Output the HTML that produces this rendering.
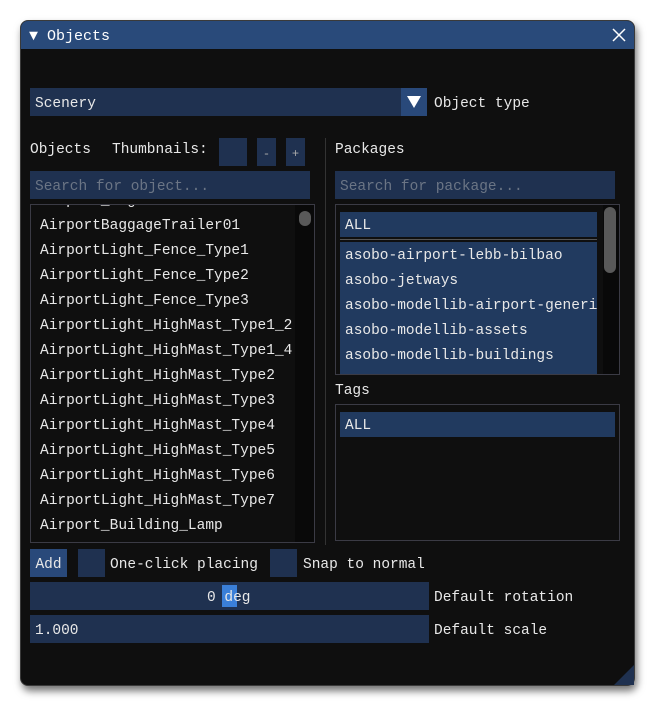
<!DOCTYPE html>
<html><head><meta charset="utf-8"><style>
*{margin:0;padding:0;box-sizing:border-box}
body{width:655px;height:706px;background:#fff;position:relative;overflow:hidden;font-family:"Liberation Mono",monospace;font-size:14.5px;color:#e8e8e8}
.a{position:absolute}
.win{left:20px;top:20px;width:615px;height:666px;background:#0f0f0f;border-radius:8px;box-shadow:2px 5px 8px rgba(0,0,0,.55);overflow:hidden;border:1px solid #3a3a3a}
.title{left:0;top:0;width:100%;height:28px;background:#294a7a}
.f{background:#1f3150}
.t{line-height:28px;white-space:pre;padding-top:2px}
.ph{color:#6b7585}
.bd{border:1px solid #3b3b45}
.sel{background:#213a5f}
</style></head><body>
<div class="a win">
 <div class="a title"></div>
 <div class="a t" style="left:8px;top:0;color:#fff;font-size:15px">▼ Objects</div>
 <svg class="a" style="left:591px;top:7px" width="14" height="14"><path d="M1 1L13 13M13 1L1 13" stroke="#fff" stroke-width="1.5"/></svg>
</div>
<div class="a f" style="left:30px;top:88px;width:371px;height:28px"></div>
<div class="a t" style="left:35px;top:88px">Scenery</div>
<div class="a" style="left:401px;top:88px;width:26px;height:28px;background:#29497a"></div>
<svg class="a" style="left:406px;top:95px" width="16" height="14"><path d="M1 1H15L8 13Z" fill="#fff"/></svg>
<div class="a t" style="left:434px;top:88px">Object type</div>

<div class="a t" style="left:30px;top:134px">Objects</div>
<div class="a t" style="left:112px;top:134px">Thumbnails:</div>
<div class="a f" style="left:219px;top:138px;width:28px;height:28px"></div>
<div class="a f t" style="left:257px;top:138px;width:19px;height:28px;text-align:center;color:#aaa;font-size:12px">-</div>
<div class="a f t" style="left:286px;top:138px;width:19px;height:28px;text-align:center;color:#aaa;font-size:12px">+</div>
<div class="a" style="left:325px;top:138px;width:1px;height:407px;background:#333"></div>

<div class="a f" style="left:30px;top:171px;width:280px;height:28px"></div>
<div class="a t ph" style="left:35px;top:171px">Search for object...</div>
<div class="a bd" style="left:30px;top:204px;width:285px;height:339px;overflow:hidden">
 <div class="a" style="right:0;top:0;width:19px;height:100%;background:#090909"></div>
 <div class="a" style="right:3px;top:6px;width:12px;height:15px;border-radius:6px;background:#595959"></div>
 <div class="a" style="left:9px;top:-16px;line-height:25px;white-space:pre">Airport_Bag
AirportBaggageTrailer01
AirportLight_Fence_Type1
AirportLight_Fence_Type2
AirportLight_Fence_Type3
AirportLight_HighMast_Type1_2
AirportLight_HighMast_Type1_4
AirportLight_HighMast_Type2
AirportLight_HighMast_Type3
AirportLight_HighMast_Type4
AirportLight_HighMast_Type5
AirportLight_HighMast_Type6
AirportLight_HighMast_Type7
Airport_Building_Lamp
Airport_Bui</div>
</div>

<div class="a t" style="left:335px;top:134px">Packages</div>
<div class="a f" style="left:335px;top:171px;width:280px;height:28px"></div>
<div class="a t ph" style="left:340px;top:171px">Search for package...</div>
<div class="a bd" style="left:335px;top:204px;width:285px;height:171px;overflow:hidden">
 <div class="a sel" style="left:4px;top:7px;width:257px;height:25px"></div>
 <div class="a" style="left:9px;top:9px;line-height:25px">ALL</div>
 <div class="a" style="left:4px;top:34px;width:257px;height:1px;background:#555"></div>
 <div class="a sel" style="left:4px;top:37px;width:257px;height:140px"></div>
 <div class="a" style="left:9px;top:39px;width:252px;overflow:hidden;line-height:25px;white-space:pre">asobo-airport-lebb-bilbao
asobo-jetways
asobo-modellib-airport-generic
asobo-modellib-assets
asobo-modellib-buildings</div>
 <div class="a" style="right:0;top:0;width:16px;height:100%;background:#090909"></div>
 <div class="a" style="right:3px;top:2px;width:12px;height:66px;border-radius:6px;background:#595959"></div>
</div>
<div class="a t" style="left:335px;top:375px">Tags</div>
<div class="a bd" style="left:335px;top:404px;width:285px;height:137px">
 <div class="a sel" style="left:4px;top:7px;width:275px;height:25px"></div>
 <div class="a" style="left:9px;top:9px;line-height:25px">ALL</div>
</div>

<div class="a t" style="left:30px;top:549px;width:37px;height:28px;background:#29497a;text-align:center">Add</div>
<div class="a f" style="left:78px;top:549px;width:27px;height:28px"></div>
<div class="a t" style="left:110px;top:549px">One-click placing</div>
<div class="a f" style="left:270px;top:549px;width:27px;height:28px"></div>
<div class="a t" style="left:303px;top:549px">Snap to normal</div>

<div class="a f" style="left:30px;top:582px;width:399px;height:28px"></div>
<div class="a" style="left:222px;top:585px;width:15px;height:22px;background:#3a7fd8"></div>
<div class="a t" style="left:207px;top:582px">0 deg</div>
<div class="a t" style="left:434px;top:582px">Default rotation</div>
<div class="a f" style="left:30px;top:615px;width:399px;height:28px"></div>
<div class="a t" style="left:35px;top:615px">1.000</div>
<div class="a t" style="left:434px;top:615px">Default scale</div>
<svg class="a" style="left:614px;top:665px" width="21" height="21"><path d="M20 0V20H0Z" fill="#1f3150"/></svg>
</body></html>
